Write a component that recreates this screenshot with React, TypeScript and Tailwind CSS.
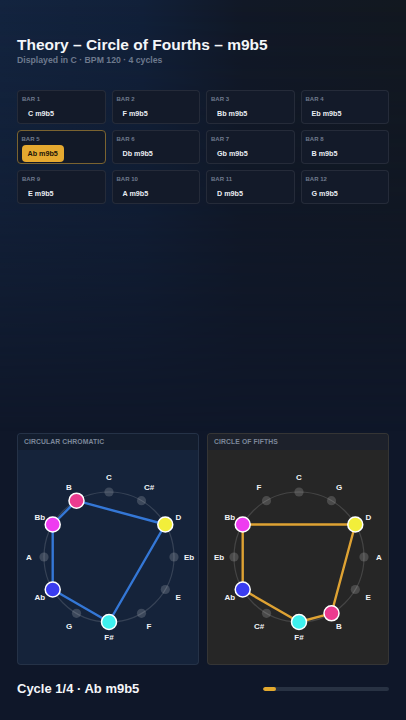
import React from "react";

type Active = { [k: string]: string };

const ACTIVE: Active = {
  B: "#ec3a8f",
  Bb: "#ee3cf0",
  D: "#f2ee3a",
  Ab: "#3a3cf0",
  "F#": "#3ef0ee",
};

const CHROMATIC = ["C", "C#", "D", "Eb", "E", "F", "F#", "G", "Ab", "A", "Bb", "B"];
const FIFTHS = ["C", "G", "D", "A", "E", "B", "F#", "C#", "Ab", "Eb", "Bb", "F"];

function Wheel({ notes, line }: { notes: string[]; line: string }) {
  const cx = 91;
  const cy = 107;
  const r = 65;
  const lr = 80;
  const pos = (i: number, rad: number) => {
    const a = (i * Math.PI) / 6;
    return [cx + rad * Math.sin(a), cy - rad * Math.cos(a)];
  };
  const activeIdx = notes.map((n, i) => (ACTIVE[n] ? i : -1)).filter((i) => i >= 0);
  const pts = activeIdx.map((i) => pos(i, r).join(",")).join(" ");
  return (
    <svg width="182" height="214" viewBox="0 0 182 214">
      <circle cx={cx} cy={cy} r={r} fill="none" stroke="rgba(255,255,255,0.14)" strokeWidth="1.2" />
      <polygon points={pts} fill="none" stroke={line} strokeWidth="2.4" strokeLinejoin="round" />
      {notes.map((n, i) => {
        const [x, y] = pos(i, r);
        const [lx, ly] = pos(i, lr);
        const c = ACTIVE[n];
        return (
          <g key={n}>
            {c ? (
              <circle cx={x} cy={y} r="7.5" fill={c} stroke="#ffffff" strokeWidth="1.5" />
            ) : (
              <circle cx={x} cy={y} r="4.6" fill="rgba(255,255,255,0.17)" />
            )}
            <text
              x={lx}
              y={ly}
              textAnchor="middle"
              dominantBaseline="central"
              fill="#f1f3f6"
              fontSize="8"
              fontWeight="700"
              fontFamily="'Liberation Sans', Arial, sans-serif"
            >
              {n}
            </text>
          </g>
        );
      })}
    </svg>
  );
}

const BARS = ["C", "F", "Bb", "Eb", "Ab", "Db", "Gb", "B", "E", "A", "D", "G"];

export default function App() {
  return (
    <div
      className="relative h-[720px] w-[406px] overflow-hidden bg-[#0f1729] text-white"
      style={{ fontFamily: "'Liberation Sans', Arial, sans-serif" }}
    >
      <div className="pointer-events-none absolute inset-0 bg-[linear-gradient(90deg,#13243f_0%,#112039_35%,#111826_60%,#121820_100%)] [mask-image:linear-gradient(180deg,#000_0%,rgba(0,0,0,0.6)_30%,transparent_60%)]" />
      <div className="relative flex h-full flex-col px-[17px]">
        <div className="pt-[35px]">
          <h1 className="text-[15.5px] font-bold leading-[19px] text-[#f4f6f9]">
            Theory – Circle of Fourths – m9b5
          </h1>
          <p className="mt-[1px] text-[8.7px] font-bold leading-[11px] text-[#6d798d]">
            Displayed in C · BPM 120 · 4 cycles
          </p>
        </div>

        <div className="mt-[24px] grid grid-cols-4 gap-x-[6px] gap-y-[6px]">
          {BARS.map((b, i) => {
            const active = i === 4;
            return (
              <div
                key={i}
                className={
                  active
                    ? "h-[34px] rounded-[4px] border-[1.5px] border-[#7a6330] bg-[#121927] px-[3.5px] pt-[3.5px]"
                    : "h-[34px] rounded-[4px] border border-[#ffffff14] bg-[#131a29] px-[4px] pt-[4px]"
                }
              >
                <div className="text-[6px] font-bold leading-[8px] text-[#707b8e]">BAR {i + 1}</div>
                <div className="mt-[2px] flex">
                  <span
                    className={
                      active
                        ? "rounded-[4px] bg-[#e5a930] px-[6px] py-[4px] text-[7.2px] font-bold leading-[9px] text-[#1a1408]"
                        : "px-[6px] py-[4px] text-[7.2px] font-bold leading-[9px] text-[#e9edf3]"
                    }
                  >
                    {b} m9b5
                  </span>
                </div>
              </div>
            );
          })}
        </div>

        <div className="mt-auto grid grid-cols-2 gap-[8px]">
          <div className="overflow-hidden rounded-[4px] border border-[#ffffff12] bg-[#15233a]">
            <div className="flex h-[16px] items-center bg-[#131d2e] px-[6px] text-[6.8px] font-bold tracking-[0.1px] text-[#7c879a]">
              CIRCULAR CHROMATIC
            </div>
            <Wheel notes={CHROMATIC} line="#3477d6" />
          </div>
          <div className="overflow-hidden rounded-[4px] border border-[#ffffff12] bg-[#262626]">
            <div className="flex h-[16px] items-center bg-[#1d212b] px-[6px] text-[6.8px] font-bold tracking-[0.1px] text-[#7c879a]">
              CIRCLE OF FIFTHS
            </div>
            <Wheel notes={FIFTHS} line="#dea233" />
          </div>
        </div>

        <div className="flex h-[55px] items-start justify-between pt-[16px]">
          <div className="text-[13px] font-bold leading-[16px] text-[#f4f6f9]">Cycle 1/4 · Ab m9b5</div>
          <div className="mt-[6px] h-[4px] w-[126px] overflow-hidden rounded-full bg-[#283243]">
            <div className="h-full rounded-full bg-[#e3a92e]" style={{ width: "10%" }} />
          </div>
        </div>
      </div>
    </div>
  );
}
